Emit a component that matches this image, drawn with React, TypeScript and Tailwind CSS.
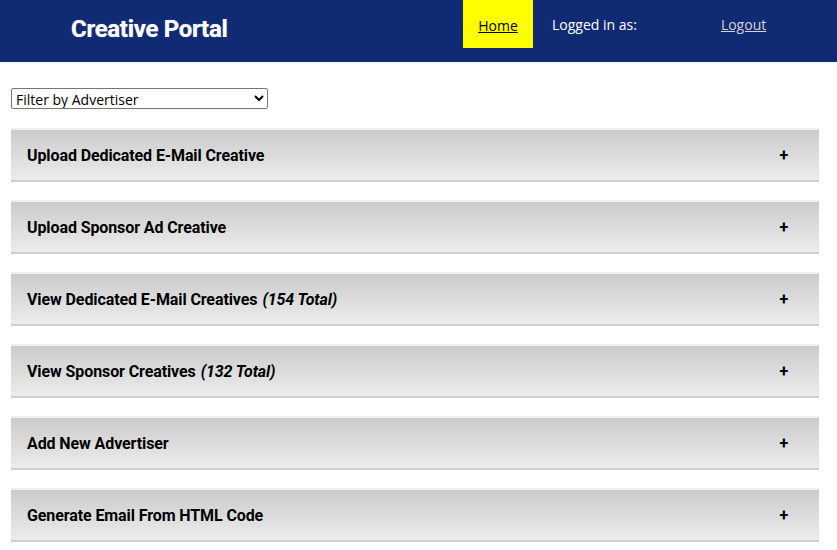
import { useState } from 'react';

type Panel = { id: string; title: string; count?: string };

const panels: Panel[] = [
  { id: 'upload-email', title: 'Upload Dedicated E-Mail Creative' },
  { id: 'upload-sponsor', title: 'Upload Sponsor Ad Creative' },
  { id: 'view-email', title: 'View Dedicated E-Mail Creatives', count: '(154 Total)' },
  { id: 'view-sponsor', title: 'View Sponsor Creatives', count: '(132 Total)' },
  { id: 'add-advertiser', title: 'Add New Advertiser' },
  { id: 'generate', title: 'Generate Email From HTML Code' },
];

export default function App() {
  const [open, setOpen] = useState<string | null>(null);

  return (
    <div className="min-h-screen bg-white font-['Open_Sans',sans-serif] text-black">
      <header className="flex h-[62px] bg-[#102a74]">
        <div className="w-[463px] pl-[71px] pt-[13px]">
          <h1 className="font-['Roboto',sans-serif] text-[24px] font-bold leading-[32px] tracking-[-0.3px] text-white [text-shadow:0_0_1px_rgba(255,255,255,0.6)]">Creative Portal</h1>
        </div>
        <nav className="flex items-start text-[14px]">
          <a href="#" className="flex h-[48px] w-[70px] items-center justify-center bg-[#ffff00] pt-[2px] text-black underline">Home</a>
          <span className="ml-[19px] mt-[15px] leading-[20px] text-white">Logged in as:</span>
          <a href="#" className="ml-[84px] mt-[15px] leading-[20px] text-[#d4d4d8] underline">Logout</a>
        </nav>
      </header>

      <div className="px-[11px] pt-[26px]">
        <select className="block h-[21px] w-[257px] rounded-[2px] border border-[#767676] bg-white py-0 pl-0 text-[14px] leading-[17px] text-black">
          <option>Filter by Advertiser</option>
        </select>

        <div className="mt-[19px] flex w-[808px] flex-col gap-[18px]">
          {panels.map((p) => (
            <div key={p.id}>
              <button
                onClick={() => setOpen(open === p.id ? null : p.id)}
                className="flex h-[54px] w-full items-center justify-between border-t-2 border-b-2 border-t-[#efefef] border-b-[#cfcfcf] bg-gradient-to-b from-[#cbcbcb] to-[#ececec] pl-[16px] pr-[31px] pt-[2px] text-left font-['Roboto',sans-serif] text-[16px] font-bold tracking-[-0.1px]"
              >
                <span>
                  {p.title}
                  {p.count && <em className="ml-[5px] italic">{p.count}</em>}
                </span>
                <span className="text-[16px] font-bold">{open === p.id ? '−' : '+'}</span>
              </button>
              {open === p.id && (
                <div className="border border-t-0 border-[#ccc] px-4 py-3 text-sm text-gray-700">Nothing here yet.</div>
              )}
            </div>
          ))}
        </div>
      </div>
    </div>
  );
}
